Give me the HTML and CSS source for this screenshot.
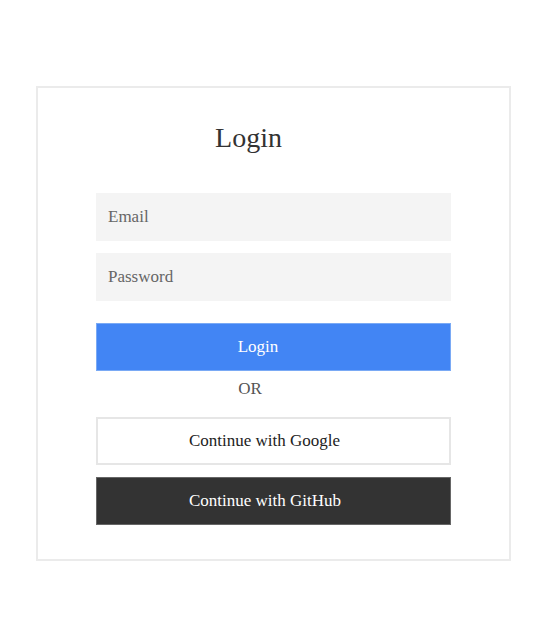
FILE: index.html
```html
<!DOCTYPE html>
<html lang="en">
<head>
<meta charset="utf-8">
<title>Login</title>
<link rel="stylesheet" href="styles.css">
</head>
<body>
<div class="page">
  <div class="card">
    <h1 class="title">Login</h1>
    <form class="form">
      <input class="field" type="email" placeholder="Email">
      <input class="field" type="password" placeholder="Password">
      <button class="btn btn-primary" type="button">Login</button>
      <div class="or">OR</div>
      <button class="btn btn-google" type="button">Continue with Google</button>
      <button class="btn btn-github" type="button">Continue with GitHub</button>
    </form>
  </div>
</div>
</body>
</html>
```
FILE: styles.css
```css
* { box-sizing: border-box; }
html, body { margin: 0; padding: 0; background: #fff; }
body { font-family: "Liberation Serif", "Times New Roman", serif; color: #333; }
.page { padding: 86px 0 0 36px; }
.card {
  width: 475px;
  height: 475px;
  border: 2px solid #ebebeb;
  padding: 34px 58px;
  background: #fff;
}
.title {
  margin: 0 0 40px;
  font-family: "Liberation Serif", "Times New Roman", serif;
  font-size: 28px;
  font-weight: normal;
  line-height: 31px;
  text-align: center;
  padding-right: 50px;
  color: #333;
}
.form { display: flex; flex-direction: column; }
.field {
  height: 48px;
  border: none;
  background: #f4f4f4;
  padding: 0 12px;
  font-family: "Liberation Serif", "Times New Roman", serif;
  font-size: 17px;
  color: #333;
  margin-bottom: 12px;
  outline: none;
}
.field::placeholder {
  color: #666;
  font-family: "Liberation Serif", "Times New Roman", serif;
}
.field + .field { margin-bottom: 22px; }
.btn {
  height: 48px;
  font-family: "Liberation Serif", "Times New Roman", serif;
  font-size: 17px;
  cursor: pointer;
  text-align: center;
  padding: 0;
}
.btn-primary {
  background: #4285f4;
  border: 1px solid #7aaaf5;
  color: #fff;
  padding-right: 31px;
}
.or {
  margin: 8px 0 18px;
  font-family: "Liberation Serif", "Times New Roman", serif;
  font-size: 17px;
  line-height: 20px;
  color: #555;
  text-align: center;
  padding-right: 47px;
}
.btn-google {
  background: #fff;
  border: 2px solid #e6e6e6;
  color: #222;
  padding-right: 18px;
  margin-bottom: 12px;
}
.btn-github {
  background: #333;
  border: 1px solid #666;
  color: #fff;
  padding-right: 17px;
}
```
